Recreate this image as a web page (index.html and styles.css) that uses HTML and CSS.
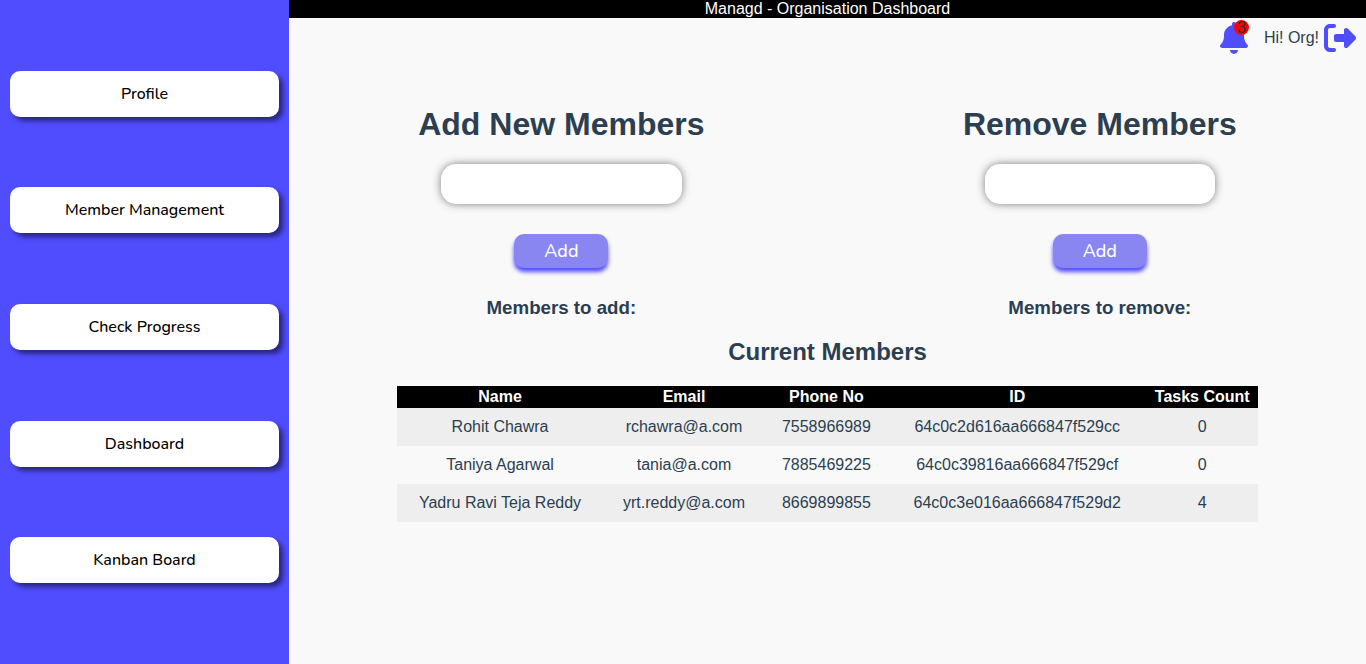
FILE: index.html
```html
<!DOCTYPE html>
<html lang="en">
<head>
<meta charset="utf-8">
<meta name="viewport" content="width=device-width, initial-scale=1">
<title>Managd - Organisation Dashboard</title>
<link rel="stylesheet" href="styles.css">
</head>
<body>
<div class="app">
  <nav class="sidebar" aria-label="Main">
    <button type="button" class="side-button">Profile</button>
    <button type="button" class="side-button">Member Management</button>
    <button type="button" class="side-button">Check Progress</button>
    <button type="button" class="side-button">Dashboard</button>
    <button type="button" class="side-button">Kanban Board</button>
  </nav>
  <main class="main">
    <header class="title-bar">Managd - Organisation Dashboard</header>
    <div class="user-bar">
      <button type="button" class="icon-button bell" aria-label="Notifications">
        <svg class="icon" viewBox="0 0 448 512" width="28" height="32" aria-hidden="true"><path d="M224 0c-17.7 0-32 14.3-32 32V51.2C119 66 64 130.6 64 208v18.8c0 47-17.3 92.4-48.5 127.6l-7.4 8.3c-8.4 9.4-10.4 22.9-5.3 34.4S19.4 416 32 416H416c12.6 0 24-7.4 29.2-18.9s3.1-25-5.3-34.4l-7.4-8.3C401.3 319.2 384 273.9 384 226.8V208c0-77.4-55-142-128-156.8V32c0-17.7-14.3-32-32-32zm45.3 493.3c12-12 18.7-28.3 18.7-45.3H224 160c0 17 6.7 33.3 18.7 45.3s28.3 18.7 45.3 18.7s33.3-6.7 45.3-18.7z"/></svg>
        <span class="badge">3</span>
      </button>
      <span class="greeting">Hi! Org!</span>
      <button type="button" class="icon-button" aria-label="Log out">
        <svg class="icon" viewBox="0 0 512 512" width="32" height="32" aria-hidden="true"><path d="M377.9 105.9L500.7 228.7c7.2 7.2 11.3 17.1 11.3 27.3s-4.1 20.1-11.3 27.3L377.9 406.1c-6.4 6.4-15 9.9-24 9.9c-18.7 0-33.9-15.2-33.9-33.9l0-62.1-128 0c-17.7 0-32-14.3-32-32l0-64c0-17.7 14.3-32 32-32l128 0 0-62.1c0-18.7 15.2-33.9 33.9-33.9c9 0 17.6 3.6 24 9.9zM160 96L96 96c-17.7 0-32 14.3-32 32l0 256c0 17.7 14.3 32 32 32l64 0c17.7 0 32 14.3 32 32s-14.3 32-32 32l-64 0c-53 0-96-43-96-96L0 128C0 75 43 32 96 32l64 0c17.7 0 32 14.3 32 32s-14.3 32-32 32z"/></svg>
      </button>
    </div>
    <div class="forms">
      <section class="member-form">
        <h1 class="form-title" id="add-title">Add New Members</h1>
        <input class="member-input" type="text" aria-labelledby="add-title">
        <button type="button" class="add-button">Add</button>
        <h3 class="list-title">Members to add:</h3>
      </section>
      <section class="member-form">
        <h1 class="form-title" id="remove-title">Remove Members</h1>
        <input class="member-input" type="text" aria-labelledby="remove-title">
        <button type="button" class="add-button">Add</button>
        <h3 class="list-title">Members to remove:</h3>
      </section>
    </div>
    <h2 class="table-title">Current Members</h2>
    <table class="members">
      <thead>
        <tr><th>Name</th><th>Email</th><th>Phone No</th><th>ID</th><th>Tasks Count</th></tr>
      </thead>
      <tbody>
        <tr><td>Rohit Chawra</td><td>rchawra@a.com</td><td>7558966989</td><td>64c0c2d616aa666847f529cc</td><td>0</td></tr>
        <tr><td>Taniya Agarwal</td><td>tania@a.com</td><td>7885469225</td><td>64c0c39816aa666847f529cf</td><td>0</td></tr>
        <tr><td>Yadru Ravi Teja Reddy</td><td>yrt.reddy@a.com</td><td>8669899855</td><td>64c0c3e016aa666847f529d2</td><td>4</td></tr>
      </tbody>
    </table>
  </main>
</div>
</body>
</html>
```
FILE: styles.css
```css
* { box-sizing: border-box; }

body {
  margin: 0;
  background: #f9f9f9;
  color: #2c3e50;
  font: 16px/18px "Liberation Sans", Arial, sans-serif;
  text-align: center;
}

button {
  border: 0;
  padding: 0;
  cursor: pointer;
}

.app {
  display: flex;
  min-height: 100vh;
}

.sidebar {
  flex: 0 0 289px;
  display: flex;
  flex-direction: column;
  justify-content: space-evenly;
  padding: 0 10px 10px;
  background: #504dff;
}

.side-button {
  padding: 12px 10px;
  border-radius: 10px;
  background: #fff;
  box-shadow: 4px 4px 5px rgba(0, 0, 0, 0.5);
  color: #000;
  font: 500 16px/22px Nunito, "Noto Sans", sans-serif;
}

.main {
  flex: 1;
  min-width: 0;
}

.title-bar {
  background: #000;
  color: #fff;
}

.user-bar {
  display: flex;
  align-items: center;
  justify-content: flex-end;
  padding: 4px 10px 0 0;
}

.icon-button {
  position: relative;
  background: none;
}

.icon {
  display: block;
  fill: #504dff;
}

.bell { margin-right: 16px; }

.badge {
  position: absolute;
  top: -2px;
  right: -1px;
  width: 15px;
  height: 15px;
  border-radius: 50%;
  background: #f00;
  color: #333;
  font: 16px/16px "Liberation Sans", Arial, sans-serif;
}

.greeting { margin-right: 5px; }

.forms {
  display: flex;
  justify-content: space-around;
  padding-top: 52px;
}

.member-form {
  display: flex;
  flex-direction: column;
  align-items: center;
}

.form-title {
  margin: 0 0 22px;
  font-size: 32px;
  line-height: 36px;
}

.member-input {
  width: 84%;
  height: 40px;
  margin-bottom: 30px;
  padding: 0 16px;
  border: 0;
  border-radius: 15px;
  background: #fff;
  box-shadow: 0 0 8px rgba(0, 0, 0, 0.5);
  font: inherit;
}

.add-button {
  padding: 4px 30px;
  border-radius: 10px;
  background: #8986f2;
  box-shadow: 0 4px 4px #504dff;
  color: #fff;
  font: 500 18px/26px Nunito, "Noto Sans", sans-serif;
}

.list-title {
  margin: 29px 0 0;
  line-height: 22px;
}

.table-title {
  margin: 19px 0 20px;
  font-size: 24px;
  line-height: 28px;
}

.members {
  width: 80%;
  margin: 0 auto;
  border-collapse: collapse;
}

.members th {
  padding: 2px;
  background: #000;
  color: #fff;
}

.members td { padding: 10px; }

.members tbody tr:nth-child(odd) { background: #eee; }
```
